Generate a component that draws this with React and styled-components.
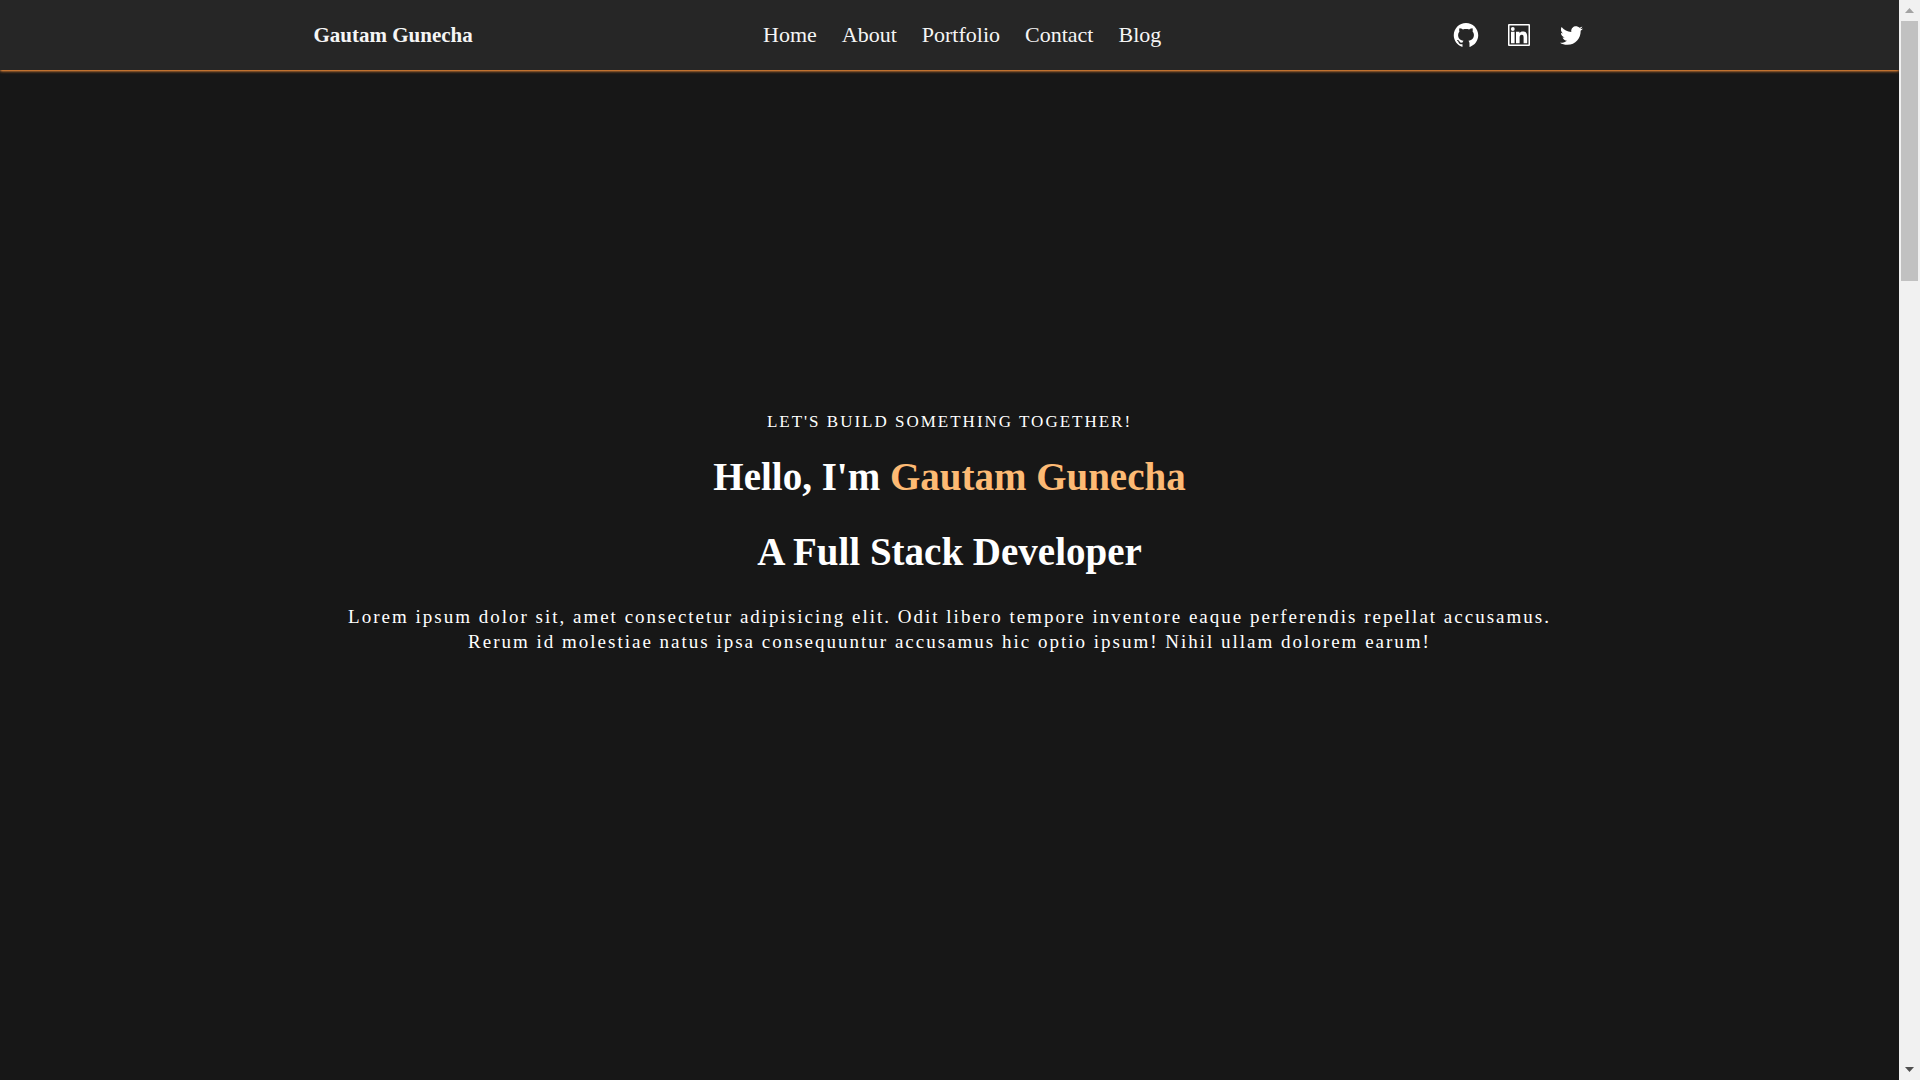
import React from "react";
import styled, { createGlobalStyle } from "styled-components";
import { AiFillGithub } from "react-icons/ai";
import { FaTwitter } from "react-icons/fa";

const GlobalStyle = createGlobalStyle`
  * {
    box-sizing: border-box;
    margin: 0;
    padding: 0;
  }
  body {
    background: #171717;
    color: #ffffff;
    font-family: "Liberation Serif", "Times New Roman", serif;
  }
`;

const Shell = styled.div`
  display: flex;
  height: 100vh;
  overflow: hidden;
`;

const Page = styled.div`
  flex: 1;
  min-width: 0;
  display: flex;
  flex-direction: column;
`;

const Header = styled.header`
  flex-shrink: 0;
  display: flex;
  justify-content: center;
  padding: 21px 0;
  background: #262626;
  box-shadow: 0 1px 3px #fb923c, 0 1px 2px -1px #fb923c;
`;

const HeaderInner = styled.div`
  width: 100%;
  max-width: 1272px;
  display: flex;
  align-items: center;
  justify-content: space-between;
`;

const Brand = styled.a`
  color: #f5f5f5;
  font-size: 21px;
  font-weight: 700;
  line-height: 28px;
  text-decoration: none;
`;

const Nav = styled.nav`
  display: flex;
  gap: 25px;
`;

const NavLink = styled.a`
  color: #f5f5f5;
  font-size: 22px;
  line-height: 28px;
  text-decoration: none;
`;

const Socials = styled.div`
  display: flex;
  gap: 25px;
`;

const SocialLink = styled.a`
  display: flex;
  align-items: center;
  justify-content: center;
  width: 28px;
  height: 28px;
  color: #ffffff;
`;

const Hero = styled.main`
  flex: 1;
  display: flex;
  flex-direction: column;
  align-items: center;
  padding: 339px 32px 0;
  text-align: center;
`;

const Eyebrow = styled.p`
  font-size: 17px;
  line-height: 25px;
  letter-spacing: 2px;
  text-transform: uppercase;
`;

const Title = styled.h1`
  margin-top: 15px;
  font-size: 39px;
  line-height: 55px;
  font-weight: 700;
`;

const Role = styled(Title).attrs({ as: "h2" })`
  margin-top: 20px;
`;

const Accent = styled.span`
  color: #fdba74;
`;

const Lead = styled.p`
  max-width: 1240px;
  margin-top: 25px;
  font-size: 19px;
  line-height: 25px;
  letter-spacing: 2px;
`;

const ScrollRail = styled.div`
  width: 21px;
  flex-shrink: 0;
  display: flex;
  flex-direction: column;
  align-items: center;
  justify-content: space-between;
  background: #f1f1f1;
`;

const RailTop = styled.div`
  display: flex;
  flex-direction: column;
  align-items: center;
`;

const Arrow = styled.div`
  height: 21px;
  display: flex;
  align-items: center;
  color: ${({ $dim }) => ($dim ? "#a3a3a3" : "#505050")};
`;

const Thumb = styled.div`
  width: 17px;
  height: 260px;
  background: #c1c1c1;
`;

const links = ["Home", "About", "Portfolio", "Contact", "Blog"];

function LinkedinIcon() {
  return (
    <svg width="22" height="22" viewBox="0 0 22 22" fill="currentColor" aria-hidden="true">
      <path
        fillRule="evenodd"
        d="M1 0h20a1 1 0 0 1 1 1v20a1 1 0 0 1-1 1H1a1 1 0 0 1-1-1V1a1 1 0 0 1 1-1Zm.5 1.500v19h19v-19Z"
      />
      <circle cx="4.800" cy="5" r="1.900" />
      <path d="M3 7.700h3.600v11.500H3ZM8 7.700h3.500v1.500c.6-1 1.700-1.700 3.300-1.700 3.400 0 4.400 2.100 4.400 5.200v6.500h-3.600v-5.700c0-1.500-.2-2.700-1.800-2.700s-2.200 1.200-2.200 2.700v5.700H8Z" />
    </svg>
  );
}

export default function App() {
  return (
    <>
      <GlobalStyle />
      <Shell>
        <Page>
          <Header>
            <HeaderInner>
              <Brand href="#home">Gautam Gunecha</Brand>
              <Nav aria-label="Main">
                {links.map((name) => (
                  <NavLink key={name} href={`#${name.toLowerCase()}`}>
                    {name}
                  </NavLink>
                ))}
              </Nav>
              <Socials>
                <SocialLink href="#github" aria-label="GitHub">
                  <AiFillGithub size={28} />
                </SocialLink>
                <SocialLink href="#linkedin" aria-label="LinkedIn">
                  <LinkedinIcon />
                </SocialLink>
                <SocialLink href="#twitter" aria-label="Twitter">
                  <FaTwitter size={23} />
                </SocialLink>
              </Socials>
            </HeaderInner>
          </Header>
          <Hero id="home">
            <Eyebrow>Let's build something together!</Eyebrow>
            <Title>
              Hello, I'm <Accent>Gautam Gunecha</Accent>
            </Title>
            <Role>A Full Stack Developer</Role>
            <Lead>
              Lorem ipsum dolor sit, amet consectetur adipisicing elit. Odit libero tempore inventore
              eaque perferendis repellat accusamus. Rerum id molestiae natus ipsa consequuntur
              accusamus hic optio ipsum! Nihil ullam dolorem earum!
            </Lead>
          </Hero>
        </Page>
        <ScrollRail aria-hidden="true">
          <RailTop>
            <Arrow $dim>
              <svg width="9" height="5" viewBox="0 0 9 5" fill="currentColor">
                <path d="M4.500 0 9 5H0Z" />
              </svg>
            </Arrow>
            <Thumb />
          </RailTop>
          <Arrow>
            <svg width="9" height="5" viewBox="0 0 9 5" fill="currentColor">
              <path d="M0 0h9L4.500 5Z" />
            </svg>
          </Arrow>
        </ScrollRail>
      </Shell>
    </>
  );
}
